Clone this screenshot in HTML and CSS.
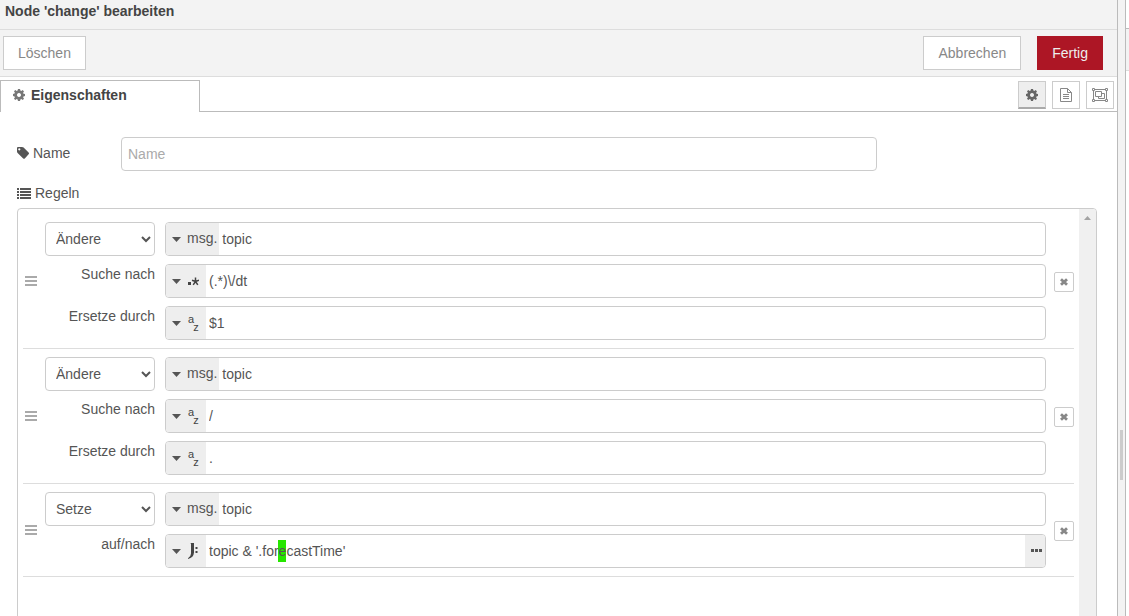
FILE: index.html
```html
<!DOCTYPE html>
<html lang="de">
<head>
<meta charset="utf-8">
<meta name="viewport" content="width=device-width, initial-scale=1">
<title>Node 'change' bearbeiten</title>
<link rel="stylesheet" href="styles.css">
</head>
<body>

<!-- shared icons -->
<svg class="sprite" aria-hidden="true">
  <symbol id="gear" viewBox="0 0 12 12">
    <path fill-rule="evenodd" d="M5 0h2l.4 1.600 .9.400L9.700 1.100l1.300 1.300-.9 1.400.4.900L12 5v2l-1.500.4-.4.900.9 1.400-1.300 1.300-1.400-.9-.9.400L7 12H5l-.4-1.500-.9-.4-1.400.9L1 9.700l.9-1.400-.4-.9L0 7V5l1.500-.4.400-.9L1 2.300 2.300 1l1.400.9.900-.4zM6 4a2 2 0 1 0 .01 0z"/>
  </symbol>
  <symbol id="caret" viewBox="0 0 9 5"><path d="M0 0h9L4.500 5z"/></symbol>
  <symbol id="cross" viewBox="0 0 8 8"><path d="M1 1.200l6 5.600M7 1.200l-6 5.600" fill="none" stroke="currentColor" stroke-width="2.800"/></symbol>
  <symbol id="bars" viewBox="0 0 12 10"><path d="M0 0h12v2H0zM0 4h12v2H0zM0 8h12v2H0z"/></symbol>
  <symbol id="regex" viewBox="0 0 12 16">
    <path d="M1 9h3v3H1z"/>
    <path d="M8.500 8.500V4.500M8.500 8.500l3.500-1.200M8.500 8.500L5 7.300M8.500 8.500l-2.300 3.400M8.500 8.500l2.300 3.400" fill="none" stroke="currentColor" stroke-width="1.500"/>
  </symbol>
  <symbol id="jsonata" viewBox="0 0 12 16">
    <path d="M3.500 0h3.500v9.500q-.3 5-6 6.500v-.8q2.800-1.200 3-4.700V1z"/>
    <path d="M8.500 4h2v2h-2zM8.500 8h2v2h-2z"/>
  </symbol>
</svg>

<div class="page">
  <main class="editor">
    <div class="header">Node 'change' bearbeiten</div>

    <div class="toolbar">
      <button type="button" class="btn">Löschen</button>
      <div class="toolbar-right">
        <button type="button" class="btn">Abbrechen</button>
        <button type="button" class="btn btn-primary">Fertig</button>
      </div>
    </div>

    <div class="tabs">
      <button type="button" class="tab"><svg class="icon-gear"><use href="#gear"/></svg>Eigenschaften</button>
      <div class="tab-buttons">
        <button type="button" class="tab-btn selected" title="Eigenschaften"><svg class="icon-gear"><use href="#gear"/></svg></button>
        <button type="button" class="tab-btn" title="Beschreibung">
          <svg width="12" height="14" viewBox="0 0 12 14" fill="none" stroke="currentColor"><path d="M.5.500h7l4 4v9H.5zM7.500.500v4h4M3 6.500h6M3 8.500h6M3 10.500h6"/></svg>
        </button>
        <button type="button" class="tab-btn" title="Darstellung">
          <svg width="16" height="14" viewBox="0 0 16 14" fill="none" stroke="currentColor"><path d="M1.500 2.500v9M14.500 2.500v9M2.500 1.500h11M2.500 12.500h11M.5.500h2v2h-2zM13.500.500h2v2h-2zM.5 11.500h2v2h-2zM13.500 11.500h2v2h-2zM3.500 3.500h6v5h-6zM9.500 5.500h3v5h-6v-2"/></svg>
        </button>
      </div>
    </div>

    <form class="form">
      <div class="form-row">
        <label for="name">
          <svg width="12" height="12" viewBox="0 0 12 12"><path fill-rule="evenodd" d="M0 1q0-1 1-1h4q1 0 1.600.6l5 5q.8.8 0 1.600L7.800 11.400q-.8.800-1.600 0L.6 6Q0 5.300 0 4.500zM2.300 1.200a1.100 1.100 0 1 0 .01 0z"/></svg>
          Name
        </label>
        <input type="text" id="name" class="name-input" placeholder="Name">
      </div>

      <div class="rules-label">
        <svg width="14" height="11" viewBox="0 0 14 11"><path d="M0 0h2v2H0zM0 3h2v2H0zM0 6h2v2H0zM0 9h2v2H0zM3 0h11v2H3zM3 3h11v2H3zM3 6h11v2H3zM3 9h11v2H3z"/></svg>
        Regeln
      </div>

      <div class="rules">
        <ol class="rule-list">
          <li class="rule">
            <svg class="handle"><use href="#bars"/></svg>
            <div class="rule-rows">
              <div class="rule-row">
                <select aria-label="Aktion 1"><option>Ändere</option><option>Setze</option></select>
                <div class="typed">
                  <button type="button" class="type" aria-label="Typ"><svg class="caret"><use href="#caret"/></svg><span class="type-text">msg.</span></button>
                  <input type="text" value="topic" aria-label="Eigenschaft 1">
                </div>
              </div>
              <div class="rule-row">
                <label for="from1">Suche nach</label>
                <div class="typed">
                  <button type="button" class="type" aria-label="Typ"><svg class="caret"><use href="#caret"/></svg><svg class="type-icon"><use href="#regex"/></svg></button>
                  <input type="text" id="from1" value="(.*)\/dt">
                </div>
              </div>
              <div class="rule-row">
                <label for="to1">Ersetze durch</label>
                <div class="typed">
                  <button type="button" class="type" aria-label="Typ"><svg class="caret"><use href="#caret"/></svg><span class="az"><span>a</span><span>z</span></span></button>
                  <input type="text" id="to1" value="$1">
                </div>
              </div>
            </div>
            <button type="button" class="remove" aria-label="Regel entfernen"><svg><use href="#cross"/></svg></button>
          </li>

          <li class="rule">
            <svg class="handle"><use href="#bars"/></svg>
            <div class="rule-rows">
              <div class="rule-row">
                <select aria-label="Aktion 2"><option>Ändere</option><option>Setze</option></select>
                <div class="typed">
                  <button type="button" class="type" aria-label="Typ"><svg class="caret"><use href="#caret"/></svg><span class="type-text">msg.</span></button>
                  <input type="text" value="topic" aria-label="Eigenschaft 2">
                </div>
              </div>
              <div class="rule-row">
                <label for="from2">Suche nach</label>
                <div class="typed">
                  <button type="button" class="type" aria-label="Typ"><svg class="caret"><use href="#caret"/></svg><span class="az"><span>a</span><span>z</span></span></button>
                  <input type="text" id="from2" value="/">
                </div>
              </div>
              <div class="rule-row">
                <label for="to2">Ersetze durch</label>
                <div class="typed">
                  <button type="button" class="type" aria-label="Typ"><svg class="caret"><use href="#caret"/></svg><span class="az"><span>a</span><span>z</span></span></button>
                  <input type="text" id="to2" value=".">
                </div>
              </div>
            </div>
            <button type="button" class="remove" aria-label="Regel entfernen"><svg><use href="#cross"/></svg></button>
          </li>

          <li class="rule">
            <svg class="handle"><use href="#bars"/></svg>
            <div class="rule-rows">
              <div class="rule-row">
                <select aria-label="Aktion 3"><option>Setze</option><option>Ändere</option></select>
                <div class="typed">
                  <button type="button" class="type" aria-label="Typ"><svg class="caret"><use href="#caret"/></svg><span class="type-text">msg.</span></button>
                  <input type="text" value="topic" aria-label="Eigenschaft 3">
                </div>
              </div>
              <div class="rule-row">
                <label for="to3">auf/nach</label>
                <div class="typed">
                  <button type="button" class="type" aria-label="Typ"><svg class="caret"><use href="#caret"/></svg><svg class="type-icon"><use href="#jsonata"/></svg></button>
                  <div class="expression">
                    <span class="marker"></span>
                    <input type="text" id="to3" value="topic &amp; '.forecastTime'">
                  </div>
                  <button type="button" class="expand" aria-label="Ausdruck bearbeiten"><svg width="11" height="3" viewBox="0 0 11 3"><path d="M0 0h3v3H0zM4 0h3v3H4zM8 0h3v3H8z"/></svg></button>
                </div>
              </div>
            </div>
            <button type="button" class="remove" aria-label="Regel entfernen"><svg><use href="#cross"/></svg></button>
          </li>
        </ol>
        <div class="scrollbar"><svg width="7" height="4" viewBox="0 0 7 4"><path d="M0 4h7L3.500 0z"/></svg></div>
      </div>
    </form>
  </main>

  <div class="separator"><div class="grip"></div></div>
  <aside class="sidebar"><div class="sidebar-bar"></div></aside>
</div>

</body>
</html>
```

FILE: styles.css
```css
* {
  box-sizing: border-box;
}

body {
  margin: 0;
  overflow: hidden;
  background: #fff;
  color: #555;
  font-family: "Liberation Sans", Arial, sans-serif;
  font-size: 14px;
  line-height: 20px;
}

button, input, select {
  margin: 0;
  font: inherit;
  color: inherit;
}

button {
  padding: 0;
  border: none;
  background: none;
  cursor: pointer;
}

svg {
  flex: none;
  fill: currentColor;
}

svg[fill="none"] {
  fill: none;
}

.sprite {
  position: absolute;
  width: 0;
  height: 0;
}

.page {
  display: flex;
  height: 100vh;
}

.editor {
  display: flex;
  flex-direction: column;
  flex: 1;
  min-width: 0;
}

/* header and toolbar */
.header {
  padding: 1px 5px 8px;
  background: #f3f3f3;
  border-bottom: 1px solid #ddd;
  color: #444;
  font-weight: bold;
}

.toolbar {
  display: flex;
  align-items: center;
  justify-content: space-between;
  padding: 6px 14px 6px 3px;
  background: #f3f3f3;
  border-bottom: 1px solid #ddd;
}

.toolbar-right {
  display: flex;
  gap: 16px;
}

.btn {
  height: 34px;
  padding: 0 14px;
  background: #fff;
  border: 1px solid #ccc;
  color: #888;
}

.btn-primary {
  background: #ad1625;
  border-color: #ad1625;
  color: #eee;
}

/* tabs */
.tabs {
  display: flex;
  justify-content: space-between;
  padding-top: 3px;
  box-shadow: inset 0 -1px #bbb;
}

.tab {
  display: flex;
  align-items: center;
  gap: 6px;
  width: 200px;
  height: 32px;
  padding: 0 12px 3px;
  background: #fff;
  border: 1px solid #bbb;
  border-bottom: none;
  color: #444;
  font-weight: bold;
}

.tab .icon-gear {
  color: #777;
}

.icon-gear {
  width: 12px;
  height: 12px;
}

.tab-buttons {
  display: flex;
  gap: 6px;
  padding: 1px 3px 3px 0;
}

.tab-btn {
  display: flex;
  align-items: center;
  justify-content: center;
  width: 28px;
  height: 28px;
  background: #fff;
  border: 1px solid #ccc;
  color: #888;
}

.tab-btn.selected {
  background: #eee;
  border-bottom: 2px solid #aaa;
  color: #666;
}

/* form */
.form {
  display: flex;
  flex-direction: column;
  flex: 1;
  padding: 25px 20px 0 17px;
}

.form-row {
  display: flex;
  margin-bottom: 12px;
}

.form-row label {
  display: flex;
  align-items: center;
  gap: 4px;
  width: 104px;
  padding-bottom: 2px;
}

.name-input {
  width: 70%;
  height: 34px;
  padding: 0 6px;
  border: 1px solid #ccc;
  border-radius: 4px;
}

.name-input::placeholder {
  color: #aaa;
}

.rules-label {
  display: flex;
  align-items: center;
  gap: 4px;
  margin-bottom: 5px;
}

/* rules */
.rules {
  display: flex;
  flex: 1 0 auto;
  min-height: 420px;
  border: 1px solid #ccc;
  border-radius: 4px;
  overflow: hidden;
}

.rule-list {
  flex: 1;
  min-width: 0;
  margin: 0;
  padding: 5px;
  list-style: none;
}

.rule {
  display: flex;
  align-items: center;
  padding: 8px 0;
  border-bottom: 1px solid #ddd;
}

.handle {
  width: 12px;
  height: 10px;
  margin: 0 8px 0 2px;
  color: #aaa;
}

.rule-rows {
  display: grid;
  flex: 1;
  gap: 8px;
  min-width: 0;
}

.rule-row {
  display: grid;
  grid-template-columns: 110px 1fr;
  gap: 10px;
}

.rule-row label {
  text-align: right;
}

.rule-row select {
  height: 34px;
  padding: 0 2px 0 6px;
  background: #fff;
  border: 1px solid #ccc;
  border-radius: 4px;
}

.typed {
  display: flex;
  height: 34px;
  min-width: 0;
  border: 1px solid #ccc;
  border-radius: 4px;
  overflow: hidden;
}

.typed input {
  flex: 1;
  width: 100%;
  min-width: 0;
  height: 32px;
  padding: 0 3px;
  background: none;
  border: none;
}

.type {
  display: flex;
  align-items: center;
  gap: 6px;
  padding: 0 2px 0 6px;
  background: #eee;
}

.caret {
  width: 9px;
  height: 5px;
}

.type-text {
  padding-bottom: 2px;
}

.type-icon {
  width: 12px;
  height: 16px;
  margin-right: 5px;
  color: #444;
}

.az {
  display: flex;
  width: 12px;
  margin-right: 5px;
  padding-left: 1px;
  color: #444;
  font-size: 11px;
  line-height: 12px;
}

.az span:first-child {
  padding-bottom: 8px;
}

.az span:last-child {
  margin-left: -1px;
  padding-top: 8px;
}

.expression {
  position: relative;
  flex: 1;
}

/* sits behind the text of the expression */
.marker {
  position: absolute;
  top: 5px;
  left: 72px;
  z-index: -1;
  width: 8px;
  height: 22px;
  background: #26e600;
}

.expand {
  display: flex;
  align-items: center;
  justify-content: center;
  width: 20px;
  padding: 0 0 2px 2px;
  background: #eee;
}

.remove {
  display: flex;
  align-items: center;
  justify-content: center;
  width: 20px;
  height: 20px;
  margin: 2px 0 0 8px;
  background: #fff;
  border: 1px solid #ccc;
  border-radius: 2px;
  color: #888;
}

.remove svg {
  width: 8px;
  height: 8px;
}

.scrollbar {
  width: 17px;
  padding: 7px 5px;
  background: #f0f0f0;
  color: #a3a3a3;
}

.scrollbar svg {
  display: block;
}

/* right edge */
.separator {
  display: flex;
  align-items: center;
  justify-content: center;
  width: 9px;
  padding-top: 294px;
  background: #f3f3f3;
  border-left: 1px solid #bbb;
  border-right: 1px solid #bbb;
}

.grip {
  width: 3px;
  height: 50px;
  background: #ccc;
}

.sidebar {
  width: 3px;
  padding-top: 28px;
}

.sidebar-bar {
  height: 43px;
  background: #f3f3f3;
  border-top: 1px solid #bbb;
  border-bottom: 1px solid #ddd;
}
```
